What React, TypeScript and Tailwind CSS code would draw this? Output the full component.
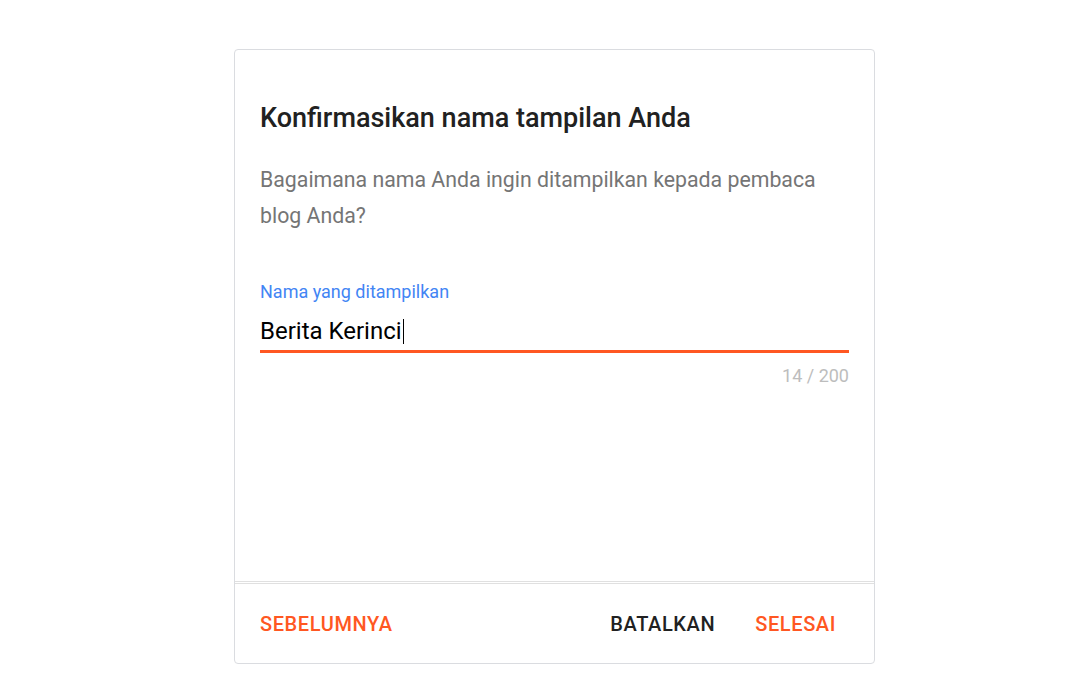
import React, { useState } from 'react';

const font = { fontFamily: 'Roboto, "Noto Sans", Arial, sans-serif' };

export default function App() {
  const [name, setName] = useState('Berita Kerinci');

  return (
    <div className="min-h-screen bg-white pl-[234px] pt-[49px]" style={font}>
      <div className="w-[641px] h-[615px] rounded-[4px] border border-[#dadce0] flex flex-col">
        {/* Body */}
        <div className="flex-1 px-[25px] pt-[52px] border-b border-[#e0e0e0]">
          <h1 className="text-[27px] leading-[32px] font-medium text-[#212121]">
            Konfirmasikan nama tampilan Anda
          </h1>
          <p className="mt-[28px] text-[21.3px] leading-[36px] text-[#757575]">
            Bagaimana nama Anda ingin ditampilkan kepada pembaca blog Anda?
          </p>

          <label className="block mt-[47px] text-[18px] leading-[22px] text-[#4285f4]">
            Nama yang ditampilkan
          </label>
          <div className="mt-[14px] border-b-[3px] border-[#ff5722] pb-[5px]">
            <div className="flex items-center h-[28px] text-[24px] leading-[28px] text-[#000]">
              <span>{name}</span>
              <span className="ml-[1px] inline-block w-px h-[25px] bg-black" />
            </div>
          </div>
          <div className="mt-[12px] text-right text-[18px] leading-[22px] text-[#bdbdbd]">
            {name.length} / 200
          </div>
        </div>

        {/* Footer */}
        <div className="h-[80px] mt-[1px] border-t border-[#e0e0e0] flex items-center justify-between pl-[25px] pr-[38px]">
          <button
            onClick={() => setName(name)}
            className="text-[20px] font-medium text-[#ff5722] tracking-[0.6px]"
          >
            SEBELUMNYA
          </button>
          <div className="flex items-center gap-[40px]">
            <button className="text-[20px] font-medium text-[#212121] tracking-[0.6px]">BATALKAN</button>
            <button className="text-[20px] font-medium text-[#ff5722] tracking-[0.6px]">SELESAI</button>
          </div>
        </div>
      </div>
    </div>
  );
}
